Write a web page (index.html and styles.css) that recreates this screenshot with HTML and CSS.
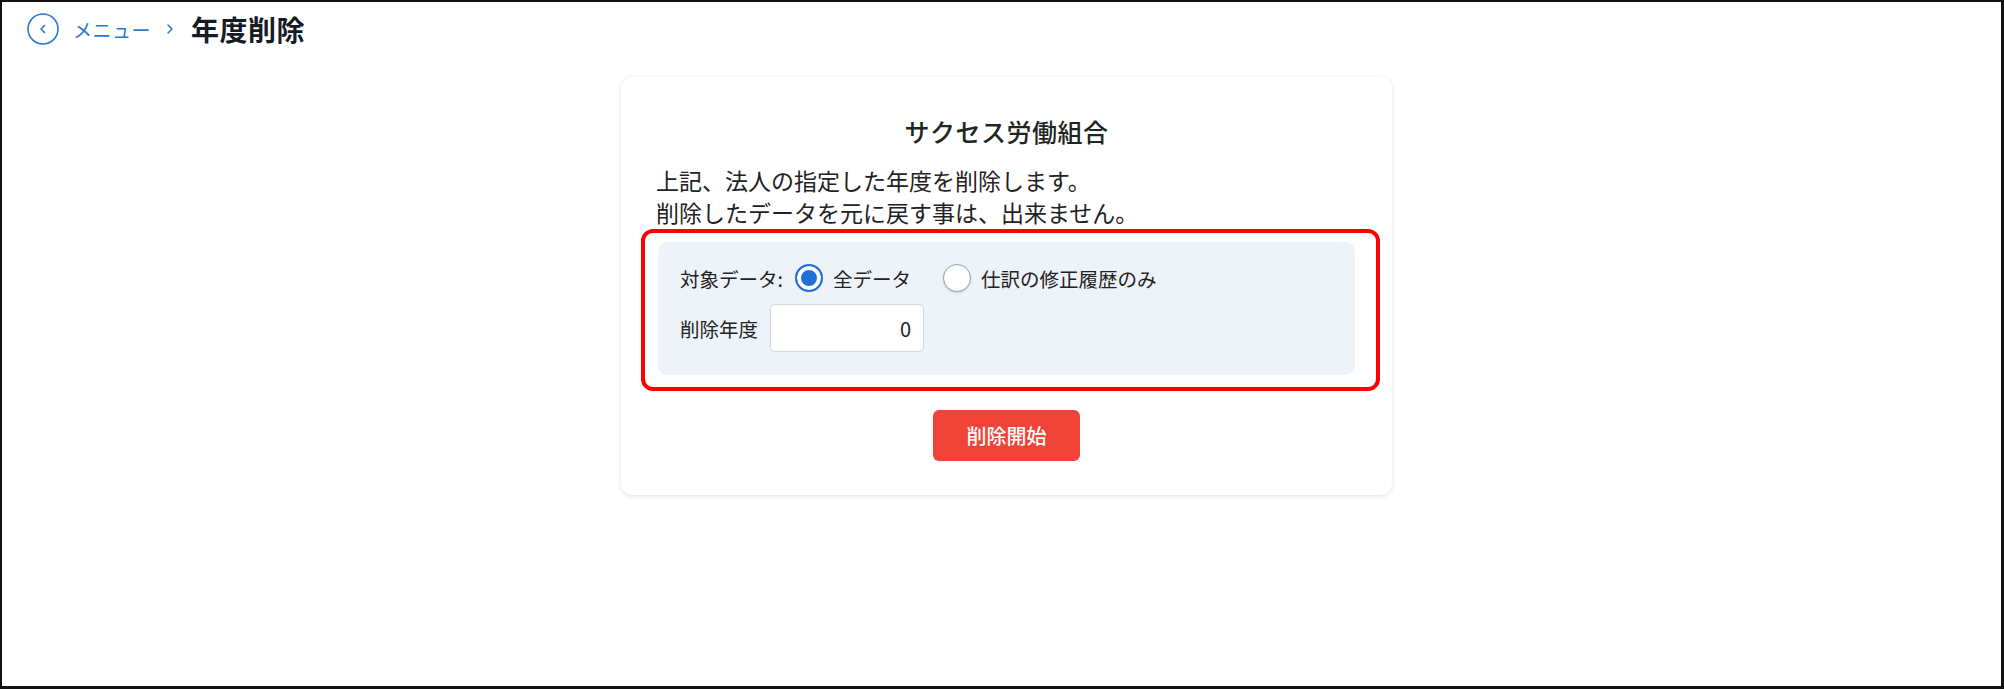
FILE: index.html
```html
<!DOCTYPE html>
<html lang="ja">
<head>
  <meta charset="utf-8">
  <title>年度削除</title>
  <link rel="stylesheet" href="styles.css">
</head>
<body>
  <div class="frame">
    <header class="breadcrumb">
      <a class="back-button" href="#">
        <svg width="32" height="32" viewBox="0 0 32 32">
          <circle cx="16" cy="16" r="15" fill="none" stroke="#2b78d6" stroke-width="1.6"/>
          <path d="M17.5 12.5 L14 16 L17.5 19.5" fill="none" stroke="#2b78d6" stroke-width="1.6" stroke-linecap="round" stroke-linejoin="round"/>
        </svg>
      </a>
      <a class="crumb-link" href="#">メニュー</a>
      <svg class="crumb-sep" width="10" height="14" viewBox="0 0 10 14">
        <path d="M3 3 L7 7 L3 11" fill="none" stroke="#2b78d6" stroke-width="1.5" stroke-linecap="round" stroke-linejoin="round"/>
      </svg>
      <h1 class="page-title">年度削除</h1>
    </header>

    <main class="card">
      <h2 class="company-name">サクセス労働組合</h2>
      <p class="notice">上記、法人の指定した年度を削除します。<br>削除したデータを元に戻す事は、出来ません。</p>

      <form class="options-panel">
        <div class="option-row">
          <span class="field-label">対象データ:</span>
          <label class="radio">
            <input type="radio" name="target" value="all" checked>
            <span>全データ</span>
          </label>
          <label class="radio">
            <input type="radio" name="target" value="history">
            <span>仕訳の修正履歴のみ</span>
          </label>
        </div>
        <div class="option-row">
          <label class="field-label" for="yearInput">削除年度</label>
          <input type="text" id="yearInput" class="year-input" value="0">
        </div>
      </form>

      <button type="button" class="btn-danger">削除開始</button>
    </main>
  </div>
</body>
</html>
```

FILE: styles.css
```css
html, body {
  margin: 0;
  height: 100%;
}

body {
  font-family: "Noto Sans CJK JP", "Noto Sans", sans-serif;
  color: #222;
  background-color: #fff;
}

.frame {
  box-sizing: border-box;
  height: 100vh;
  border: 2px solid #111;
  border-right-width: 3px;
  border-bottom-width: 3px;
}

/* breadcrumb */
.breadcrumb {
  display: flex;
  align-items: center;
  height: 32px;
  padding: 11px 25px 0;
}

.back-button {
  display: flex;
  width: 32px;
  height: 32px;
}

.crumb-link {
  margin-left: 14px;
  font-size: 19px;
  color: #2b78d6;
  text-decoration: none;
  letter-spacing: 0.5px;
}

.crumb-sep {
  margin: 0 16px 0 14px;
}

.page-title {
  margin: 0;
  font-size: 28px;
  font-weight: 700;
  color: #161b26;
  line-height: 1;
  letter-spacing: 0.5px;
}

/* card */
.card {
  width: 771px;
  box-sizing: border-box;
  margin: 32px auto 0;
  padding: 37px 35px 34px;
  background-color: #fff;
  border-radius: 12px;
  box-shadow: 0 1px 5px rgba(0, 0, 0, 0.13);
  display: flex;
  flex-direction: column;
  align-items: center;
  position: relative;
  left: 5px;
}

.company-name {
  margin: 0;
  font-size: 25px;
  font-weight: 500;
  line-height: 34px;
  letter-spacing: 0.5px;
  color: #1e2623;
}

.notice {
  align-self: stretch;
  margin: 16px 0 0;
  font-size: 23px;
  line-height: 32px;
  color: #222;
}

.options-panel {
  align-self: stretch;
  position: relative;
  margin: 14px 2px 0;
  padding: 21px 22px 23px;
  background-color: #eef3fa;
  border-radius: 10px;
  display: flex;
  flex-direction: column;
  gap: 11px;
}

/* red frame around the option panel */
.options-panel::before {
  content: "";
  position: absolute;
  top: -13px;
  left: -17px;
  right: -25px;
  bottom: -16px;
  border: 4px solid #f00;
  border-radius: 12px;
  pointer-events: none;
}

.option-row {
  display: flex;
  align-items: center;
  min-height: 30px;
  font-size: 19.5px;
}

.field-label {
  margin-right: 12px;
}

.radio {
  display: flex;
  align-items: center;
  margin-right: 32px;
  cursor: pointer;
}

.radio input {
  appearance: none;
  -webkit-appearance: none;
  margin: 0 10px 0 0;
  width: 28px;
  height: 28px;
  border-radius: 50%;
  border: 1.5px solid #9aa0a6;
  background-color: #fff;
  box-shadow: 0 1px 2px rgba(0, 0, 0, 0.15);
  box-sizing: border-box;
}

.radio input:checked {
  border: 2px solid #1f6fd6;
  background-color: #1f6fd6;
  box-shadow: inset 0 0 0 4px #fff;
}

.year-input {
  width: 154px;
  height: 48px;
  box-sizing: border-box;
  padding: 0 12px;
  border: 1px solid #cfd6df;
  border-radius: 5px;
  background-color: #fff;
  font-family: inherit;
  font-size: 20px;
  text-align: right;
  color: #222;
}

.btn-danger {
  margin-top: 35px;
  width: 147px;
  height: 51px;
  border: none;
  border-radius: 6px;
  background-color: #f04438;
  color: #fff;
  font-family: inherit;
  font-size: 20px;
  font-weight: 500;
  cursor: pointer;
}
```
